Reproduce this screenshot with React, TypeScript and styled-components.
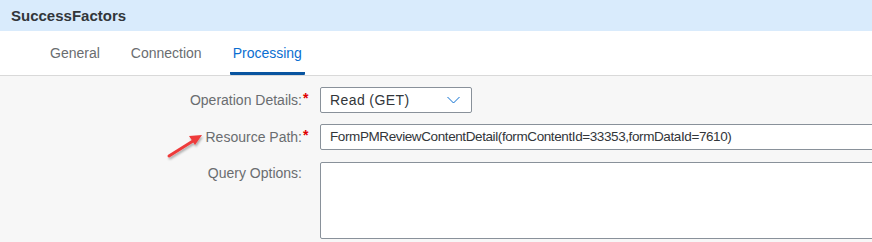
import styled, {createGlobalStyle} from "styled-components";

const GlobalStyle = createGlobalStyle`
    html, body {
        margin: 0;
        padding: 0;
        background: #f7f7f7;
        overflow: hidden;
    }
    body {
        font-family: "Liberation Sans", Arial, sans-serif;
        color: #32363a;
    }
`

const tabs = ["General", "Connection", "Processing"]

const ChevronDown = () => (
    <svg width="13" height="8" viewBox="0 0 13 8" fill="none">
        <path d="M0.5 1 L6.5 7 L12.5 1" stroke="#0a6ed1" strokeWidth="1"/>
    </svg>
)

const Arrow = () => (
    <ArrowSvg width="50" height="32" viewBox="0 0 50 32">
        <defs>
            <filter id="sh" x="-20%" y="-20%" width="140%" height="160%">
                <feDropShadow dx="1" dy="2" stdDeviation="1.2" floodColor="#000" floodOpacity="0.3"/>
            </filter>
        </defs>
        <g filter="url(#sh)">
            <line x1="6" y1="26" x2="30" y2="11" stroke="#ee3b3b" strokeWidth="3" strokeLinecap="round"/>
            <polygon points="39,5 26,6 32,15" fill="#ee3b3b"/>
        </g>
    </ArrowSvg>
)

export default function App() {
    return (
        <Page>
            <GlobalStyle/>
            <Header>SuccessFactors</Header>
            <TabBar>
                {tabs.map(t => (
                    <Tab key={t} $active={t === "Processing"}>{t}</Tab>
                ))}
            </TabBar>
            <Form>
                <Label>Operation Details:<Req>*</Req></Label>
                <Select>
                    <span>Read (GET)</span>
                    <ChevronDown/>
                </Select>

                <Label>Resource Path:<Req>*</Req><Arrow/></Label>
                <Input>FormPMReviewContentDetail(formContentId=33353,formDataId=7610)</Input>

                <Label $top>Query Options:<ReqSpace/></Label>
                <TextArea/>
            </Form>
        </Page>
    )
}

const Page = styled.div`
    width: 872px;
    height: 242px;
    overflow: hidden;
    background: #f7f7f7;
`

const Header = styled.div`
    height: 31px;
    background: #d9ebfc;
    padding-left: 11px;
    font-size: 15px;
    font-weight: bold;
    line-height: 31px;
    color: #32363a;
`

const TabBar = styled.div`
    height: 44px;
    background: #fff;
    border-bottom: 1px solid #d9d9d9;
    display: flex;
    padding-left: 47px;
    gap: 25px;
`

const Tab = styled.div<{ $active?: boolean }>`
    font-size: 14px;
    line-height: 44px;
    color: ${p => p.$active ? "#0a6ed1" : "#6a6d70"};
    padding: 0 3px;
    border-bottom: 3px solid ${p => p.$active ? "#0854a0" : "transparent"};
    border-radius: 0 0 1px 1px;
    height: 41px;
`

const Form = styled.div`
    display: grid;
    grid-template-columns: 311px 580px;
    column-gap: 9px;
    row-gap: 11px;
    padding-top: 11px;
`

const Label = styled.div<{ $top?: boolean }>`
    position: relative;
    display: flex;
    justify-content: flex-end;
    align-items: ${p => p.$top ? "flex-start" : "center"};
    padding-top: ${p => p.$top ? "4px" : "0"};
    font-size: 14px;
    color: #6a6d70;
`

const Req = styled.span`
    color: #e00000;
    font-weight: bold;
    width: 8px;
    margin-left: 1px;
    align-self: flex-start;
    line-height: 18px;
    padding-top: 2px;
`

const ReqSpace = styled.span`
    width: 9px;
`

const ArrowSvg = styled.svg`
    position: absolute;
    left: 163px;
    top: 6px;
`

const fieldBase = `
    box-sizing: border-box;
    background: #fff;
    border: 1px solid #89919a;
    border-radius: 2px;
    font-size: 14px;
    color: #32363a;
`

const Select = styled.div`
    ${fieldBase};
    width: 152px;
    height: 26px;
    display: flex;
    align-items: center;
    justify-content: space-between;
    padding: 0 11px 0 9px;
    letter-spacing: 0.4px;
`

const Input = styled.div`
    ${fieldBase};
    height: 26px;
    line-height: 24px;
    padding-left: 9px;
    white-space: nowrap;
    font-size: 13.5px;
    letter-spacing: -0.4px;
`

const TextArea = styled.div`
    ${fieldBase};
    height: 77px;
    margin-top: 1px;
`
